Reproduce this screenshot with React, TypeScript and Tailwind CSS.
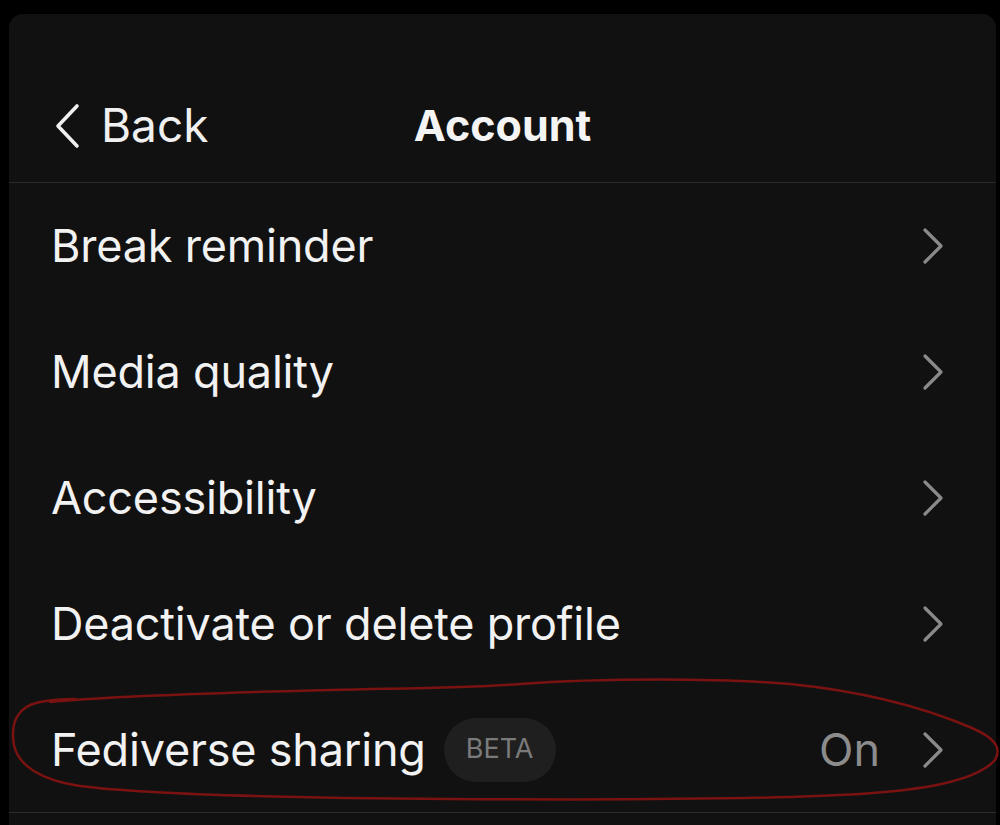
import React from 'react'

const rows = [
  { label: 'Break reminder' },
  { label: 'Media quality' },
  { label: 'Accessibility' },
  { label: 'Deactivate or delete profile' },
  { label: 'Fediverse sharing', beta: true, value: 'On' },
]

function Chevron() {
  return (
    <svg width="22" height="38" viewBox="0 0 22 38" fill="none" className="shrink-0">
      <path d="M3 3 L19 19 L3 35" stroke="#8a8a8a" strokeWidth="3.2" strokeLinecap="round" strokeLinejoin="round" />
    </svg>
  )
}

interface RowProps {
  label: string
  beta?: boolean
  value?: string
  last?: boolean
}

function Row({ label, beta, value, last }: RowProps) {
  return (
    <div className={`h-[126px] flex items-center pl-[42px] pr-[52px] ${last ? 'border-b border-[#2c2c2c]' : ''}`}>
      <span className="text-[45px] text-[#f2f2f2] tracking-[-0.2px]">{label}</span>
      {beta && (
        <span className="ml-[18px] h-[64px] w-[112px] rounded-full bg-[#1f1f1f] flex items-center justify-center text-[27px] text-[#7a7a7a]">
          BETA
        </span>
      )}
      <div className="flex-1" />
      {value && <span className="text-[45px] text-[#8c8c8c] mr-[42px]">{value}</span>}
      <Chevron />
    </div>
  )
}

export default function App() {
  return (
    <div className="relative w-[1000px] h-[825px] bg-black overflow-hidden" style={{ fontFamily: 'Inter, "Noto Sans", sans-serif' }}>
      <div className="absolute inset-0 pt-[14px] pl-[9px] pr-[4px]">
        <div className="h-full rounded-t-[14px] bg-[#111111]">
          <div className="h-[169px] pt-[54px] border-b border-[#2a2a2a] grid grid-cols-[1fr_auto_1fr] items-start">
            <div className="flex items-center pl-[45px] h-[115px]">
              <svg width="28" height="46" viewBox="0 0 28 46" fill="none">
                <path d="M23 3 L4 23 L23 43" stroke="#f0f0f0" strokeWidth="3.6" strokeLinecap="round" strokeLinejoin="round" />
              </svg>
              <span className="ml-[19px] text-[46px] text-[#f0f0f0]">Back</span>
            </div>
            <div className="flex items-center h-[115px]">
              <span className="text-[43px] font-bold text-[#f4f4f4]">Account</span>
            </div>
            <div />
          </div>
          {rows.map((r, i) => (
            <Row key={r.label} {...r} last={i === rows.length - 1} />
          ))}
        </div>
      </div>
      <svg className="absolute inset-0 pointer-events-none" width="1000" height="825" viewBox="0 0 1000 825" fill="none">
        <path
          d="M50 702 C120 695 250 692 330 690 C420 688 470 688 520 684 C600 678 720 678 790 684 C870 692 930 710 972 728 C995 738 1002 748 995 760 C975 782 920 790 860 794 C760 800 600 800 450 799 C300 798 150 795 80 786 C40 780 18 765 14 745 C10 722 18 706 40 702 C55 699 65 699 75 699"
          stroke="#7a1212"
          strokeWidth="2.5"
          strokeLinecap="round"
        />
      </svg>
    </div>
  )
}
